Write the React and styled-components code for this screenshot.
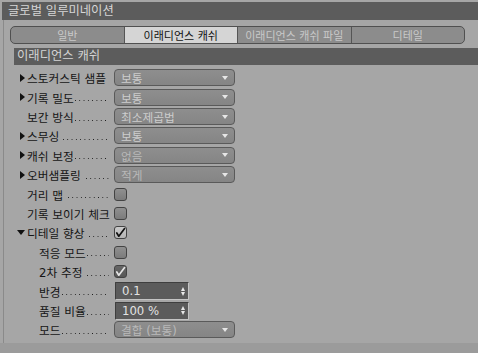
import styled, { createGlobalStyle } from 'styled-components';

const GlobalStyle = createGlobalStyle`
  html, body {
    margin: 0;
    padding: 0;
    background: #a6a6a6;
  }
  * {
    box-sizing: border-box;
  }
`;

const FONT = `"DejaVu Sans", "Noto Sans CJK KR", sans-serif`;

const Page = styled.div`
  width: 478px;
  height: 353px;
  background: #a6a6a6;
  display: flex;
  flex-direction: column;
  font-family: ${FONT};
  overflow: hidden;
`;

const TitleBar = styled.div`
  margin: 2px 0 0 2px;
  height: 18px;
  background: #5c5c5c;
  color: #d6d6d6;
  font-size: 12.3px;
  line-height: 18px;
  padding-left: 6px;
`;

const Body = styled.div`
  flex: 1;
  margin-left: 3px;
  border-left: 1px solid #8a8a8a;
  padding: 6px 13px 0 6px;
  display: flex;
  flex-direction: column;
`;

const Footer = styled.div`
  height: 10px;
  background: #9b9b9b;
`;

const TabBar = styled.div`
  height: 18px;
  display: flex;
  border: 1px solid #505050;
  border-radius: 5px;
  overflow: hidden;
  background: #8c8c8c;
`;

const Tab = styled.div`
  flex: 1;
  display: flex;
  align-items: center;
  justify-content: center;
  font-size: 11px;
  color: ${(p) => (p.$active ? '#111' : '#c9c9c9')};
  background: ${(p) => (p.$active ? '#d5d5d5' : 'transparent')};
  & + & {
    border-left: 1px solid #555;
  }
`;

const SectionHeader = styled.div`
  margin: 4px -13px 0 4px;
  height: 17px;
  background: #5c5c5c;
  color: #d4d4d4;
  font-size: 12.3px;
  line-height: 17px;
  padding-left: 3px;
`;

const Rows = styled.div`
  margin-top: 3px;
  display: flex;
  flex-direction: column;
`;

const Row = styled.div`
  height: 19.42px;
  display: flex;
  align-items: center;
`;

const LabelCell = styled.div`
  width: 97px;
  margin-left: 7px;
  padding-left: ${(p) => p.$indent * 12}px;
  display: flex;
  align-items: center;
  font-size: 11.7px;
  color: #151515;
  white-space: nowrap;
`;

const Twisty = styled.span`
  width: 10px;
  flex: none;
  display: flex;
  align-items: center;
  justify-content: ${(p) => (p.$open ? 'flex-start' : 'center')};
`;

const LabelText = styled.span`
  flex: none;
`;

const Leader = styled.span`
  flex: 1;
  height: 12px;
  margin-left: ${(p) => p.$gap}px;
  margin-right: 5px;
  background-image: linear-gradient(to right, #1c1c1c 1px, transparent 1px);
  background-size: 4.3px 1px;
  background-repeat: repeat-x;
  background-position: 1px 9px;
`;

const Select = styled.div`
  width: 121px;
  height: 17px;
  border: 1px solid #5a5a5a;
  border-radius: 4px;
  background: linear-gradient(#8e8e8e, #858585);
  display: flex;
  align-items: center;
  justify-content: space-between;
  padding: 0 6px 0 6px;
  font-size: 11.7px;
  color: ${(p) => (p.$dim ? '#b9b9b9' : '#cdcdcd')};
`;

const Caret = styled.span`
  width: 0;
  height: 0;
  border-left: 3.5px solid transparent;
  border-right: 3.5px solid transparent;
  border-top: 4px solid #e6e6e6;
`;

const Check = styled.div`
  width: 13px;
  height: 13px;
  border: 1px solid #434343;
  border-radius: 3px;
  background: ${(p) =>
    p.$variant === 'light'
      ? 'linear-gradient(#cacaca, #b4b4b4)'
      : p.$variant === 'dark'
      ? 'linear-gradient(#666, #585858)'
      : 'linear-gradient(#909090, #7b7b7b)'};
  display: flex;
  align-items: center;
  justify-content: center;
`;

const Spinner = styled.div`
  width: 74px;
  height: 18px;
  margin-left: 1px;
  border: 1px solid;
  border-color: #3e3e3e #c4c4c4 #c4c4c4 #3e3e3e;
  border-radius: 1px;
  background: #5b5b5b;
  color: #e2e2e2;
  font-size: 11.7px;
  display: flex;
  align-items: center;
  justify-content: space-between;
  padding: 0 3px 0 6px;
`;

const Arrows = styled.span`
  display: flex;
  flex-direction: column;
  gap: 1px;
  span {
    width: 0;
    height: 0;
    border-left: 2.5px solid transparent;
    border-right: 2.5px solid transparent;
  }
  span:first-child {
    border-bottom: 4px solid #e8e8e8;
  }
  span:last-child {
    border-top: 4px solid #e8e8e8;
  }
`;

const RightArrow = () => (
  <svg width="5" height="8" viewBox="0 0 5 8">
    <path d="M0 0 L5 4 L0 8 Z" fill="#111" />
  </svg>
);

const DownArrow = () => (
  <svg width="8" height="5" viewBox="0 0 8 5">
    <path d="M0 0 L8 0 L4 5 Z" fill="#111" />
  </svg>
);

const CheckMark = ({ color }) => (
  <svg width="11" height="11" viewBox="0 0 11 11">
    <path
      d="M1.8 6 L3.8 9.2 L9.6 1.6"
      fill="none"
      stroke={color}
      strokeWidth="1.7"
      strokeLinecap="round"
      strokeLinejoin="round"
    />
  </svg>
);

const rows = [
  { label: '스토커스틱 샘플', twisty: 'closed', type: 'select', value: '보통', gap: 3 },
  { label: '기록 밀도', twisty: 'closed', type: 'select', value: '보통', gap: 0 },
  { label: '보간 방식', type: 'select', value: '최소제곱법', gap: 0 },
  { label: '스무싱', twisty: 'closed', type: 'select', value: '보통', gap: 3 },
  { label: '캐쉬 보정', twisty: 'closed', type: 'select', value: '없음', dim: true, gap: 0 },
  { label: '오버샘플링', twisty: 'closed', type: 'select', value: '적게', dim: true, gap: 4 },
  { label: '거리 맵', type: 'check', gap: 4 },
  { label: '기록 보이기 체크', type: 'check', gap: 0 },
  { label: '디테일 향상', twisty: 'open', type: 'check', checked: 'light', gap: 4 },
  { label: '적응 모드', indent: 1, type: 'check', gap: 0 },
  { label: '2차 추정', indent: 1, type: 'check', checked: 'dark', gap: 4 },
  { label: '반경', indent: 1, type: 'spin', value: '0.1', gap: 0 },
  { label: '품질 비율', indent: 1, type: 'spin', value: '100 %', gap: 0 },
  { label: '모드', indent: 1, type: 'select', value: '결합 (보통)', dim: true, gap: 0 },
];

const Control = ({ row }) => {
  if (row.type === 'select') {
    return (
      <Select $dim={row.dim}>
        <span>{row.value}</span>
        <Caret />
      </Select>
    );
  }
  if (row.type === 'spin') {
    return (
      <Spinner>
        <span>{row.value}</span>
        <Arrows>
          <span />
          <span />
        </Arrows>
      </Spinner>
    );
  }
  return (
    <Check $variant={row.checked}>
      {row.checked === 'light' && <CheckMark color="#111" />}
      {row.checked === 'dark' && <CheckMark color="#e6e6e6" />}
    </Check>
  );
};

const App = () => {
  return (
    <>
      <GlobalStyle />
      <Page>
        <TitleBar>글로벌 일루미네이션</TitleBar>
        <Body>
          <TabBar>
            <Tab>일반</Tab>
            <Tab $active>이래디언스 캐쉬</Tab>
            <Tab>이래디언스 캐쉬 파일</Tab>
            <Tab>디테일</Tab>
          </TabBar>
          <SectionHeader>이래디언스 캐쉬</SectionHeader>
          <Rows>
            {rows.map((row) => (
              <Row key={row.label}>
                <LabelCell $indent={row.indent || 0}>
                  <Twisty $open={row.twisty === 'open'}>
                    {row.twisty === 'closed' && <RightArrow />}
                    {row.twisty === 'open' && <DownArrow />}
                  </Twisty>
                  <LabelText>{row.label}</LabelText>
                  <Leader $gap={row.gap} />
                </LabelCell>
                <Control row={row} />
              </Row>
            ))}
          </Rows>
        </Body>
        <Footer />
      </Page>
    </>
  );
};

export default App;
